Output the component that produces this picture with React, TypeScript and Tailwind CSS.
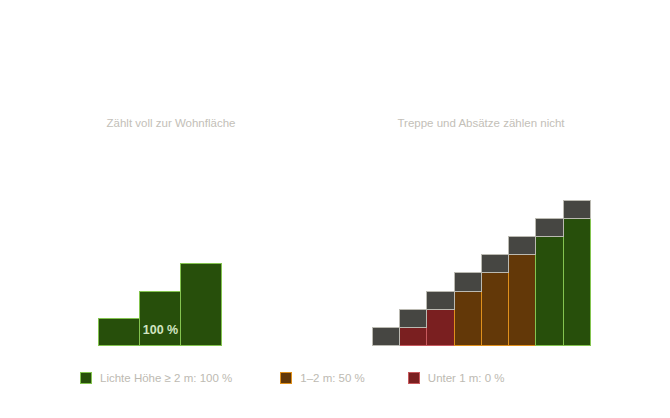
import React from "react";

const GREEN = { fill: "#274f0b", stroke: "#84c450" };
const ORANGE = { fill: "#633808", stroke: "#e0901c" };
const RED = { fill: "#7a1f20", stroke: "#c85a5e" };
const GRAY = { fill: "#464642", stroke: "#bbbab2" };

function Box({ x0, x1, top, bottom, c }: { x0: number; x1: number; top: number; bottom: number; c: { fill: string; stroke: string } }) {
  return (
    <rect
      x={x0 + 0.5}
      y={top + 0.5}
      width={x1 - x0}
      height={bottom - top}
      fill={c.fill}
      stroke={c.stroke}
      strokeWidth={1}
    />
  );
}

function LeftChart() {
  const xs = [77, 118, 159, 200];
  const tops = [187, 160, 132];
  return (
    <svg width={300} height={215} className="block">
      {tops.map((t, i) => (
        <Box key={i} x0={xs[i]} x1={xs[i + 1]} top={t} bottom={214} c={GREEN} />
      ))}
      <text
        x={139.5}
        y={203}
        textAnchor="middle"
        fontSize={12.5}
        fontWeight={600}
        fill="#d2e5c2"
        fontFamily="'Liberation Sans', Arial, sans-serif"
      >
        100 %
      </text>
    </svg>
  );
}

function RightChart() {
  const xs = [41, 68, 95, 123, 150, 177, 204, 232, 259];
  const lv = [214, 196, 178, 160, 141, 123, 105, 87, 69];
  const colors = [null, RED, RED, ORANGE, ORANGE, ORANGE, GREEN, GREEN];
  return (
    <svg width={300} height={215} className="block">
      {colors.map((c, i) =>
        c ? <Box key={"c" + i} x0={xs[i]} x1={xs[i + 1]} top={lv[i]} bottom={214} c={c} /> : null
      )}
      {colors.map((_, i) => (
        <Box key={"g" + i} x0={xs[i]} x1={xs[i + 1]} top={lv[i + 1]} bottom={lv[i]} c={GRAY} />
      ))}
    </svg>
  );
}

function LegendItem({ c, label, className }: { c: { fill: string; stroke: string }; label: string; className?: string }) {
  return (
    <div className={"flex items-center gap-[8px] " + (className ?? "")}>
      <span
        className="block w-[12px] h-[12px] border"
        style={{ backgroundColor: c.fill, borderColor: c.stroke }}
      />
      <span>{label}</span>
    </div>
  );
}

export default function App() {
  return (
    <div className="w-[670px] h-[418px] bg-white pt-[115px] font-['Liberation_Sans',Arial,sans-serif] text-[11.5px] leading-[16px] text-[#c3c0b8]">
      <div className="grid grid-cols-[300px_300px] gap-x-[10px] pl-[21px]">
        <div className="flex flex-col items-center">
          <div>Zählt voll zur Wohnfläche</div>
          <LeftChart />
        </div>
        <div className="flex flex-col items-center">
          <div>Treppe und Absätze zählen nicht</div>
          <RightChart />
        </div>
      </div>
      <div className="mt-[24px] pl-[80px] flex items-center text-[#bdbab2]">
        <LegendItem c={GREEN} label="Lichte Höhe ≥ 2 m: 100 %" />
        <LegendItem c={ORANGE} label="1–2 m: 50 %" className="ml-[48px]" />
        <LegendItem c={RED} label="Unter 1 m: 0 %" className="ml-[43px]" />
      </div>
    </div>
  );
}
